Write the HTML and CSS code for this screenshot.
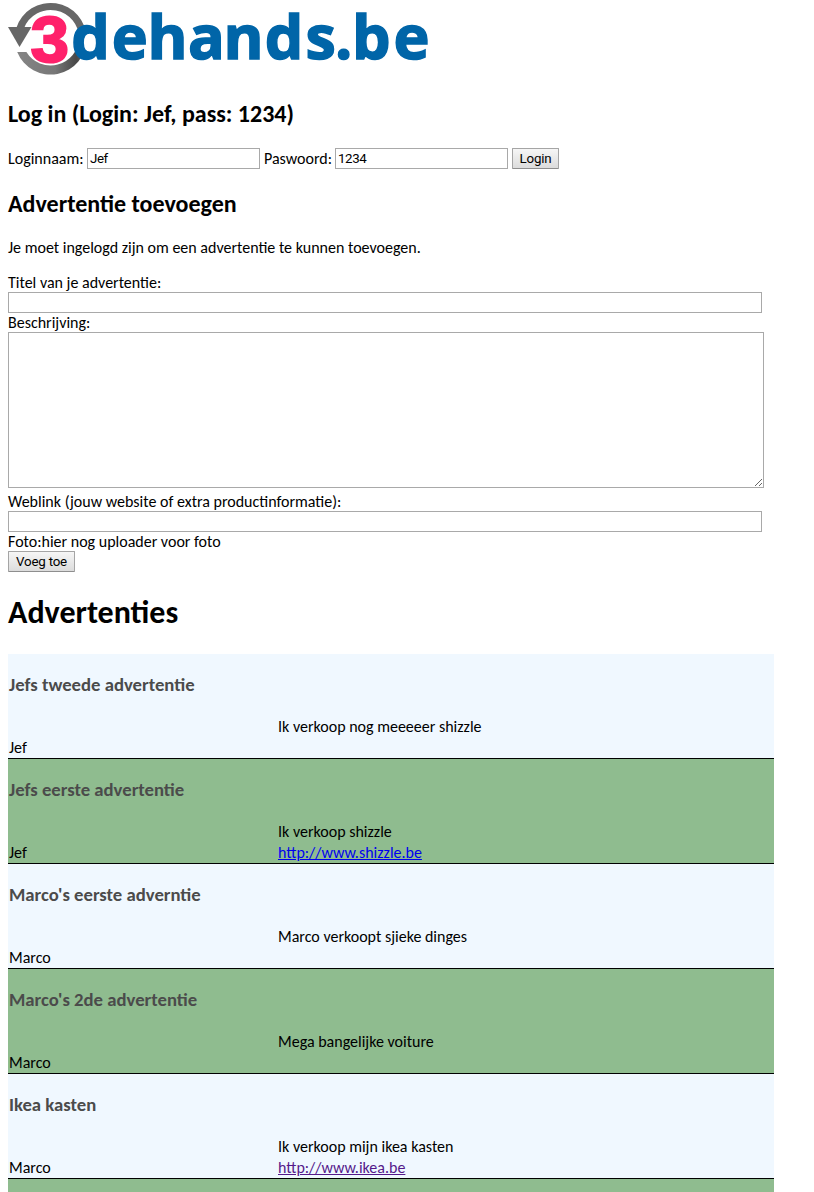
FILE: index.html
```html
<!DOCTYPE html>
<html lang="nl">
<head>
<meta charset="utf-8">
<title>3dehands.be</title>
<link rel="stylesheet" href="styles.css">
</head>
<body>
<svg class="logo" width="440" height="78" viewBox="8 0 440 78" role="img" aria-label="3dehands.be">
  <defs>
    <linearGradient id="ring" x1="0" y1="0" x2="1" y2="0">
      <stop offset="0" stop-color="#858585"/><stop offset=".55" stop-color="#777"/><stop offset=".85" stop-color="#484848"/><stop offset="1" stop-color="#666"/>
    </linearGradient>
  </defs>
  <path d="M16.300 28A36 36 0 0 1 86.600 38.500H79.100A28.500 28.500 0 0 0 24.100 28Z" fill="#676767"/>
  <path d="M17.200 52A36 36 0 0 0 86.600 38.500H79.100A28.500 28.500 0 0 1 26.400 52Z" fill="url(#ring)"/>
  <path d="M8 27H31.500L19.500 47Z" fill="#676767"/>
  <ellipse cx="90" cy="43" rx="9" ry="13" fill="#fff"/>
  <text class="logo-three" x="30.500" y="61.500" textLength="38.500" lengthAdjust="spacingAndGlyphs">3</text>
  <text class="logo-name" x="71.200 111.700 147.500 188 223.500 264.700 305.500 335 352 393.500" y="58.800">dehands.be</text>
</svg>

<h2 class="heading">Log in (Login: Jef, pass: 1234)</h2>
<form class="login">
  <label class="login-name" for="user">Loginnaam:</label>
  <input class="field login-field" id="user" type="text" value="Jef">
  <label class="login-pass" for="pass">Paswoord:</label>
  <input class="field login-field" id="pass" type="text" value="1234">
  <button class="button login-button" type="button">Login</button>
</form>

<h2 class="heading add-heading">Advertentie toevoegen</h2>
<p class="notice">Je moet ingelogd zijn om een advertentie te kunnen toevoegen.</p>
<form class="add">
  <label class="line" for="title">Titel van je advertentie:</label>
  <input class="field wide" id="title" type="text">
  <label class="line" for="description">Beschrijving:</label>
  <textarea class="field area" id="description"></textarea>
  <label class="line" for="link">Weblink (jouw website of extra productinformatie):</label>
  <input class="field wide" id="link" type="text">
  <div class="line">Foto:hier nog uploader voor foto</div>
  <button class="button add-button" type="button">Voeg toe</button>
</form>

<h1 class="ads-heading">Advertenties</h1>
<main class="ads">
  <article class="ad"><h3 class="ad-title">Jefs tweede advertentie</h3><p class="ad-text">Ik verkoop nog meeeeer shizzle</p><span class="ad-user">Jef</span></article>
  <article class="ad"><h3 class="ad-title">Jefs eerste advertentie</h3><p class="ad-text">Ik verkoop shizzle</p><span class="ad-user">Jef</span><a class="ad-link" href="#shizzle">http://www.shizzle.be</a></article>
  <article class="ad"><h3 class="ad-title">Marco's eerste adverntie</h3><p class="ad-text">Marco verkoopt sjieke dinges</p><span class="ad-user">Marco</span></article>
  <article class="ad"><h3 class="ad-title">Marco's 2de advertentie</h3><p class="ad-text">Mega bangelijke voiture</p><span class="ad-user">Marco</span></article>
  <article class="ad"><h3 class="ad-title">Ikea kasten</h3><p class="ad-text">Ik verkoop mijn ikea kasten</p><span class="ad-user">Marco</span><a class="ad-link seen" href="#ikea">http://www.ikea.be</a></article>
  <div class="ad ad-next"></div>
</main>
</body>
</html>
```
FILE: styles.css
```css
* { box-sizing: border-box; }
body {
  margin: 0; padding: 0 8px;
  background: #fff; color: #000;
  font: 16px/20px Calibri, Carlito, Lato, sans-serif;
}
.logo { display: block; }
.logo-three { font: bold 64px "Liberation Sans", Arial, sans-serif; fill: #ff216b; stroke: #ff216b; stroke-width: 2; }
.logo-name { font: bold 61px "Open Sans", sans-serif; fill: #0065a8; stroke: #0065a8; stroke-width: 1.5; }
.heading { margin: 21px 0 19px; font-size: 24px; line-height: 30px; }
.login { display: flex; height: 21px; align-items: center; }
.login-name { width: 79px; }
.login-pass { width: 71px; margin-left: 4px; }
.field {
  display: block; height: 21px; margin: 0; padding: 1px;
  border: 1px solid #a9a9a9; border-radius: 0; background: #fff;
  font: 13.33px "Liberation Sans", Arial, sans-serif; outline: 0;
}
.login-field { width: 173px; padding-left: 2px; font: 13.33px Roboto, Arial, sans-serif; letter-spacing: -.4px; }
.button {
  display: block; height: 21px; padding: 0; border: 1px solid #a5a5a5; border-bottom-color: #8e8e8e; border-radius: 1px;
  background: linear-gradient(#f6f6f6, #dcdcdc); color: #000;
  font: 13.33px Roboto, Arial, sans-serif; letter-spacing: -.2px;
}
.login-button { width: 47px; margin-left: 4px; }
.add-heading { margin: 20px 0 19px; }
.notice { margin: 0 0 15px; }
.line { display: block; height: 19px; line-height: 20px; white-space: nowrap; }
.wide { width: 754px; }
.area { width: 756px; height: 156px; margin-bottom: 4px; resize: both; }
.add-button { width: 67px; }
.ads-heading { margin: 21px 0; font-size: 32px; line-height: 40px; }
.ads { width: 766px; }
.ad {
  display: grid; grid-template-columns: 269px 1fr; grid-template-rows: 63px 21px 20px;
  height: 105px; padding-left: 1px; border-bottom: 1px solid #000; background: #f0f8ff; line-height: 20px;
}
.ad:nth-child(even) { background: #8fbc8f; }
.ad-next { height: 13px; border-bottom: 0; }
.ad-title { grid-column: 1 / 3; margin: 0; color: #4b4b4b; font-size: 18.72px; line-height: 61px; }
.ad-text { grid-area: 2 / 2; margin: 0; }
.ad-user { grid-area: 3 / 1; }
.ad-link { grid-area: 3 / 2; justify-self: start; color: #00e; text-decoration: underline; }
.seen { color: #551a8b; }
```
